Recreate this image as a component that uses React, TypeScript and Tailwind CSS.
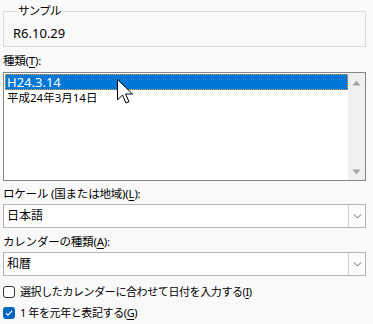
import React from "react";

const font = "font-['Noto_Sans','Noto_Sans_CJK_JP',sans-serif]";

const Mn = ({ c }: { c: string }) => (
  <span className="underline underline-offset-[2px] decoration-[1px]">{c}</span>
);

const Chevron = () => (
  <svg width="9" height="6" viewBox="0 0 9 6">
    <path d="M1 1.5 L4.5 5 L8 1.5" stroke="#5f5f5f" strokeWidth="1" fill="none" />
  </svg>
);

const Combo = ({ value }: { value: string }) => (
  <div className="flex h-[24px] w-[363px] border border-[#b5b5b5] bg-white">
    <div className="flex flex-1 items-center pl-[3px] text-[12px] leading-[16px] text-black">
      {value}
    </div>
    <div className="flex w-[17px] items-center justify-center border-l border-[#d0d0d0] bg-[#fcfcfc]">
      <Chevron />
    </div>
  </div>
);

const Cursor = () => (
  <svg
    className="absolute left-[116px] top-[78px]"
    width="18"
    height="27"
    viewBox="0 0 18 27"
  >
    <path
      d="M1.5 1.5 L1.5 22 L6.5 17 L10 25 L13 23.7 L9.5 16 L16.5 16 Z"
      fill="#ffffff"
      stroke="#000000"
      strokeWidth="1"
      strokeLinejoin="miter"
    />
  </svg>
);

export default function App() {
  return (
    <div className={`relative h-[324px] w-[373px] overflow-hidden bg-[#f9f9f9] pl-[3px] text-black ${font}`}>
      <fieldset className="mt-[3px] w-[363px] border border-[#dadada] px-[9px] pt-[5px] pb-[4px]">
        <legend className="ml-[4px] px-[1px] text-[11.5px] leading-[16px] tracking-[-0.7px]">サンプル</legend>
        <div className="text-[13px] leading-[18px]">R6.10.29</div>
      </fieldset>

      <div className="mt-[6px] text-[11.5px] leading-[16px] tracking-[-0.2px]">
        種類(<Mn c="T" />):
      </div>

      <div className="mt-[3px] flex h-[109px] w-[363px] border border-[#868686] bg-white">
        <div className="flex flex-1 flex-col py-[1px] pl-[1px]">
          <div className="h-[16px] border border-dotted border-[#f0a040] bg-[#0078d7] pl-[1px] text-[13px] leading-[14px] text-white">
            H24.3.14
          </div>
          <div className="h-[16px] pl-[2px] text-[11.5px] leading-[16px]">平成24年3月14日</div>
        </div>
        <div className="flex w-[17px] flex-col items-center justify-between bg-[#f0f0f0] pt-[7px] pb-[5px]">
          <svg width="9" height="6" viewBox="0 0 9 6">
            <path d="M4.5 0.5 L8.5 5.5 L0.5 5.5 Z" fill="#a3a3a3" />
          </svg>
          <svg width="9" height="6" viewBox="0 0 9 6">
            <path d="M0.5 0.5 L8.5 0.5 L4.5 5.5 Z" fill="#a3a3a3" />
          </svg>
        </div>
      </div>

      <div className="mt-[5px] text-[11.5px] leading-[16px] tracking-[-0.2px]">
        ロケール (国または地域)(<Mn c="L" />):
      </div>
      <div className="mt-[2px]">
        <Combo value="日本語" />
      </div>

      <div className="mt-[6px] text-[11.5px] leading-[16px] tracking-[-0.2px]">
        カレンダーの種類(<Mn c="A" />):
      </div>
      <div className="mt-[2px]">
        <Combo value="和暦" />
      </div>

      <div className="mt-[8px] flex items-center gap-[5px] text-[11px] leading-[16px]">
        <div className="h-[12px] w-[12px] rounded-[3px] border border-[#333333] bg-white" />
        <span className="tracking-[-0.4px]">
          選択したカレンダーに合わせて日付を入力する(<Mn c="I" />)
        </span>
      </div>

      <div className="mt-[5px] flex items-center gap-[5px] text-[11px] leading-[16px]">
        <div className="flex h-[12px] w-[12px] items-center justify-center rounded-[3px] bg-[#0067c0]">
          <svg width="10" height="10" viewBox="0 0 10 10">
            <path d="M2 5.2 L4 7.2 L8 2.8" stroke="#ffffff" strokeWidth="1.1" fill="none" />
          </svg>
        </div>
        <span className="tracking-[-0.4px]">
          1 年を元年と表記する(<Mn c="G" />)
        </span>
      </div>

      <Cursor />
    </div>
  );
}
